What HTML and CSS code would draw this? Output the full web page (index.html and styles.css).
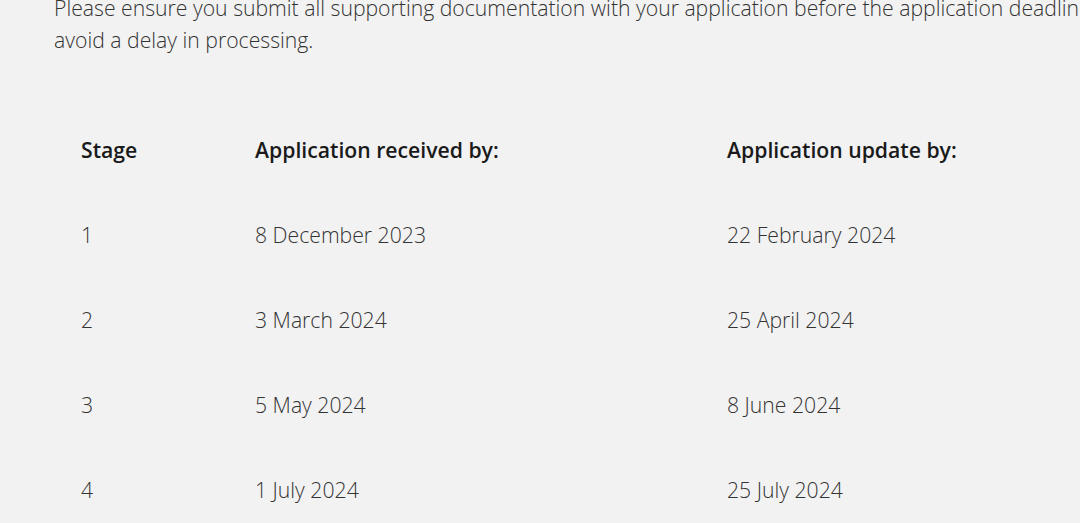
FILE: index.html
```html
<!DOCTYPE html>
<html lang="en">
<head>
<meta charset="utf-8">
<link rel="stylesheet" href="styles.css">
</head>
<body>
<main class="content">
  <p class="intro">Please ensure you submit all supporting documentation with your application before the application deadline to<br>avoid a delay in processing.</p>
  <table class="stages">
    <thead>
      <tr><th class="c1">Stage</th><th class="c2">Application received by:</th><th class="c3">Application update by:</th></tr>
    </thead>
    <tbody>
      <tr><td>1</td><td>8 December 2023</td><td>22 February 2024</td></tr>
      <tr><td>2</td><td>3 March 2024</td><td>25 April 2024</td></tr>
      <tr><td>3</td><td>5 May 2024</td><td>8 June 2024</td></tr>
      <tr><td>4</td><td>1 July 2024</td><td>25 July 2024</td></tr>
    </tbody>
  </table>
</main>
</body>
</html>
```

FILE: styles.css
```css
html, body {
  margin: 0;
  padding: 0;
  background: #f2f2f2;
  overflow: hidden;
}
body {
  font-family: "Open Sans", "Liberation Sans", sans-serif;
  color: #333333;
}
.content {
  padding-left: 54px;
  margin-top: -8px;
  width: 1200px;
}
.intro {
  margin: 0;
  font-size: 21.2px;
  font-weight: 300;
  line-height: 32px;
  white-space: nowrap;
}
.stages {
  margin-top: 51px;
  border-collapse: collapse;
  font-size: 21.2px;
}
.stages th, .stages td {
  text-align: left;
  padding: 0 0 0 27px;
  height: 85px;
  vertical-align: middle;
  line-height: 30px;
}
.stages th {
  font-weight: 600;
  color: #1a1a1a;
}
.stages td {
  font-weight: 300;
  color: #333333;
}
.c1 { width: 147px; }
.c2 { width: 445px; }
.c3 { width: 400px; }
```
